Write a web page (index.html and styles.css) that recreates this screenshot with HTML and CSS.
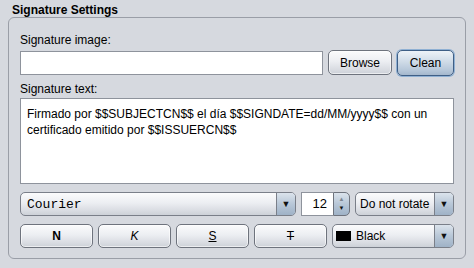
FILE: index.html
```html
<!DOCTYPE html>
<html lang="es">
<head>
    <meta charset="UTF-8">
    <title>Signature Settings</title>
    <link rel="stylesheet" href="styles.css">
</head>
<body>
    <div class="title">Signature Settings</div>
    <div class="group">
        <label class="field-label">Signature image:</label>
        <div class="row row-image">
            <input type="text" class="text-input" value="">
            <button class="btn btn-browse">Browse</button>
            <button class="btn btn-clean">Clean</button>
        </div>

        <label class="field-label label-text">Signature text:</label>
        <textarea class="text-area">Firmado por $$SUBJECTCN$$ el día $$SIGNDATE=dd/MM/yyyy$$ con un certificado emitido por $$ISSUERCN$$</textarea>

        <div class="row row-font">
            <div class="combo combo-font">
                <span class="combo-value mono">Courier</span>
                <span class="combo-arrow">&#9660;</span>
            </div>
            <div class="spinner">
                <span class="spinner-value">12</span>
                <span class="spinner-buttons">
                    <span class="spin-up">&#9650;</span>
                    <span class="spin-down">&#9660;</span>
                </span>
            </div>
            <div class="combo combo-rotate">
                <span class="combo-value">Do not rotate</span>
                <span class="combo-arrow">&#9660;</span>
            </div>
        </div>

        <div class="row row-style">
            <button class="btn btn-style"><b>N</b></button>
            <button class="btn btn-style"><i>K</i></button>
            <button class="btn btn-style"><u>S</u></button>
            <button class="btn btn-style"><s>T</s></button>
            <div class="combo combo-color">
                <span class="combo-value"><span class="swatch"></span>Black</span>
                <span class="combo-arrow">&#9660;</span>
            </div>
        </div>
    </div>
</body>
</html>
```

FILE: styles.css
```css
body {
    margin: 0;
    background: #d6d9df;
    font-family: "Liberation Sans", Arial, sans-serif;
    font-size: 12px;
    color: #000;
    width: 474px;
    height: 268px;
    overflow: hidden;
}

.title {
    font-weight: bold;
    padding: 3px 0 0 12px;
    height: 14px;
    line-height: 14px;
}

.group {
    margin-left: 8px;
    width: 458px;
    height: 242px;
    box-sizing: border-box;
    border: 1px solid #9a9ea7;
    border-radius: 6px;
    padding: 14px 11px 0 11px;
    display: flex;
    flex-direction: column;
}

.field-label {
    display: block;
    height: 18px;
    line-height: 16px;
}

.label-text {
    margin-top: 6px;
    height: 17px;
}

.row {
    display: flex;
    gap: 5px;
}

.row-image {
    height: 25px;
    align-items: center;
}

.text-input {
    width: 303px;
    height: 24px;
    box-sizing: border-box;
    border: 1px solid #8e939c;
    background: #fff;
    margin: 0;
    padding: 0 4px;
    font: inherit;
}

.btn {
    font: inherit;
    color: #000;
    height: 25px;
    margin: 0;
    padding: 0;
    box-sizing: border-box;
    border: 1px solid #6e737d;
    border-radius: 5px;
    background: linear-gradient(#fbfbfc, #eceef2 45%, #d9dce2 80%, #cdd1d8);
    box-shadow: inset 0 0 0 1px rgba(255, 255, 255, 0.6);
    cursor: pointer;
}

.btn-browse {
    width: 64px;
}

.btn-clean {
    width: 57px;
    height: 26px;
    border: 1px solid #3f5f86;
    background: linear-gradient(#eef3f8, #cfdbe7 45%, #b6c7d9 80%, #a5b8cd);
    box-shadow: 0 0 0 1px #8fb0d3;
}

.text-area {
    display: block;
    width: 434px;
    height: 86px;
    box-sizing: border-box;
    border: 1px solid #8e939c;
    background: #fff;
    margin: 0;
    padding: 7px 6px;
    font: inherit;
    line-height: 16px;
    resize: none;
    overflow: hidden;
}

.row-font {
    margin-top: 8px;
    height: 24px;
}

.combo {
    display: flex;
    height: 24px;
    box-sizing: border-box;
    border: 1px solid #7a7f89;
    border-radius: 5px;
    background: linear-gradient(#fbfbfc, #eceef2 45%, #d9dce2 80%, #cdd1d8);
    overflow: hidden;
}

.combo-value {
    flex: 1;
    display: flex;
    align-items: center;
    padding-left: 6px;
    white-space: nowrap;
    overflow: hidden;
}

.combo-arrow {
    width: 18px;
    flex: none;
    border-left: 1px solid #7a7f89;
    background: linear-gradient(#dbe3ec, #b8c7d7 50%, #9fb2c7);
    display: flex;
    align-items: center;
    justify-content: center;
    font-size: 9px;
    color: #111;
}

.mono {
    font-family: "Liberation Mono", "Courier New", monospace;
    font-size: 13px;
}

.combo-font {
    width: 276px;
}

.spinner {
    width: 49px;
    height: 24px;
    display: flex;
}

.spinner-value {
    width: 32px;
    box-sizing: border-box;
    background: #fff;
    border: 1px solid #8e939c;
    border-right: none;
    text-align: right;
    padding-right: 6px;
    line-height: 22px;
    font-size: 13px;
}

.spinner-buttons {
    width: 17px;
    box-sizing: border-box;
    border: 1px solid #6e737d;
    border-radius: 0 5px 5px 0;
    background: linear-gradient(#dbe3ec, #b8c7d7 50%, #9fb2c7);
    display: flex;
    flex-direction: column;
    align-items: center;
    justify-content: center;
    font-size: 6px;
    line-height: 9px;
}

.spin-up {
    color: #7d8590;
}

.spin-down {
    color: #111;
}

.combo-rotate {
    width: 99px;
}

.combo-rotate .combo-value {
    padding-left: 4px;
}

.row-style {
    margin-top: 8px;
    height: 24px;
}

.btn-style {
    width: 73px;
    height: 24px;
}

.btn-style s {
    font-weight: normal;
}

.combo-color {
    width: 122px;
}

.combo-color .combo-value {
    padding-left: 3px;
}

.swatch {
    display: inline-block;
    width: 15px;
    height: 10px;
    background: #000;
    margin-right: 5px;
}
```
